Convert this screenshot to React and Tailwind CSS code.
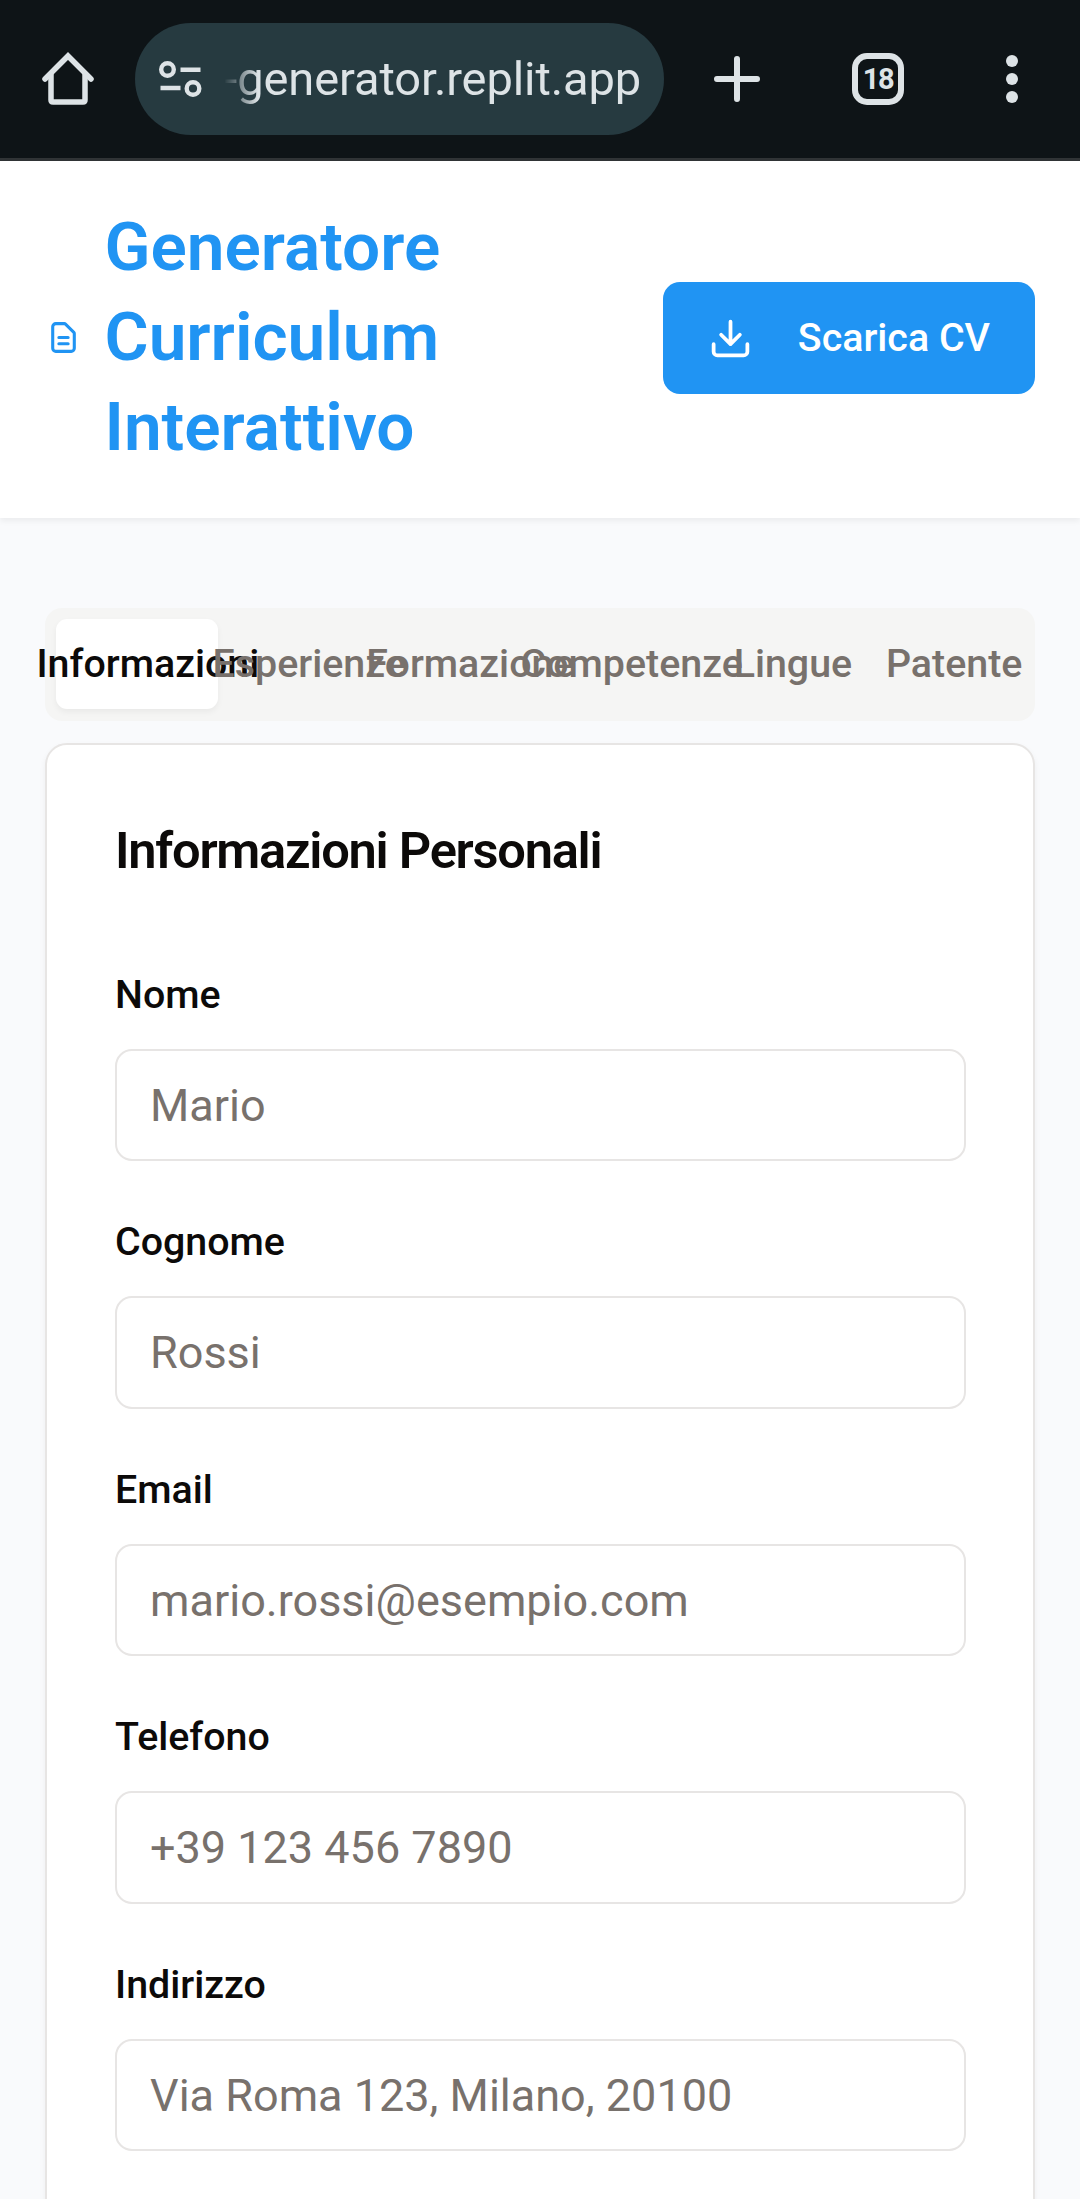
import React from "react";

const TABS = ["Informazioni", "Esperienze", "Formazione", "Competenze", "Lingue", "Patente"];

const FIELDS = [
  { label: "Nome", placeholder: "Mario" },
  { label: "Cognome", placeholder: "Rossi" },
  { label: "Email", placeholder: "mario.rossi@esempio.com" },
  { label: "Telefono", placeholder: "+39 123 456 7890" },
  { label: "Indirizzo", placeholder: "Via Roma 123, Milano, 20100" },
];

function BrowserBar() {
  return (
    <div className="flex h-[161px] shrink-0 items-center border-b-[3px] border-[#303436] bg-[#0e1417] text-[#dde3e6]">
      <svg className="ml-[41px] h-[54px] w-[54px] shrink-0" viewBox="0 0 54 54" fill="none" stroke="currentColor" strokeWidth="5.5" strokeLinecap="round" strokeLinejoin="round">
        <path d="M4 27 L27 4 L50 27" strokeLinejoin="miter" />
        <path d="M10 23 V48 Q10 50 12 50 H42 Q44 50 44 48 V23" />
      </svg>
      <div className="ml-[40px] flex h-[112px] w-[529px] items-center rounded-full bg-[#263a40]">
        <svg className="ml-[24px] h-[38px] w-[43px] shrink-0" viewBox="0 0 43 38" fill="none" stroke="currentColor" strokeWidth="4.4">
          <circle cx="8.5" cy="9.5" r="6.3" />
          <path d="M21.5 9.7H41.5M1.5 28H21.5" />
          <circle cx="34" cy="28.5" r="6.3" />
        </svg>
        <div className="ml-[20px] flex w-[419px] justify-end whitespace-nowrap font-[Roboto] text-[47px] leading-[56px] tracking-[-0.1px] [mask-image:linear-gradient(to_right,transparent_2px,black_36px)]">
          -generator.replit.app
        </div>
      </div>
      <svg className="ml-[49px] h-[48px] w-[48px] shrink-0" viewBox="0 0 48 48" fill="none" stroke="currentColor" strokeWidth="6" strokeLinecap="round">
        <path d="M24 4V44M4 24H44" />
      </svg>
      <div className="ml-[91px] flex h-[52px] w-[52px] shrink-0 items-center justify-center rounded-[15px] border-[6px] border-[#dde3e6] font-[Roboto] text-[29px] font-bold leading-none tracking-[-1.5px]">
        18
      </div>
      <svg className="ml-[102px] h-[48px] w-[12px] shrink-0" viewBox="0 0 12 48" fill="currentColor">
        <circle cx="6" cy="6" r="6" />
        <circle cx="6" cy="24" r="6" />
        <circle cx="6" cy="42" r="6" />
      </svg>
    </div>
  );
}

function Header() {
  return (
    <header className="flex h-[357px] shrink-0 items-center justify-between bg-white px-[45px] pb-[3px] shadow-[0_3px_6px_rgba(0,0,0,0.06)]">
      <div className="flex items-center pb-[2px] text-[#2094f3]">
        <svg className="h-[37px] w-[37px]" viewBox="0 0 24 24" fill="none" stroke="currentColor" strokeWidth="2" strokeLinecap="round" strokeLinejoin="round">
          <path d="M9 12h6m-6 4h6m2 5H7a2 2 0 0 1-2-2V5a2 2 0 0 1 2-2h5.586a1 1 0 0 1 .707.293l5.414 5.414a1 1 0 0 1 .293.707V19a2 2 0 0 1-2 2z" />
        </svg>
        <h1 className="ml-[22.5px] w-[360px] text-[67.5px] font-semibold leading-[90px]">Generatore Curriculum Interattivo</h1>
      </div>
      <button className="flex h-[112px] w-[372px] items-center justify-between rounded-[17px] bg-[#2094f3] px-[45px] text-[39.375px] font-medium text-white">
        <svg className="h-[45px] w-[45px]" viewBox="0 0 24 24" fill="none" stroke="currentColor" strokeWidth="2" strokeLinecap="round" strokeLinejoin="round">
          <path d="M21 15v4a2 2 0 0 1-2 2H5a2 2 0 0 1-2-2v-4M7 10l5 5 5-5M12 15V3" />
        </svg>
        <span className="whitespace-nowrap">Scarica CV</span>
      </button>
    </header>
  );
}

function Tabs() {
  return (
    <div className="grid h-[112.5px] grid-cols-6 rounded-[17px] bg-[#f5f5f4] p-[11.25px]">
      {TABS.map((tab, i) => (
        <button
          key={tab}
          className={
            i === 0
              ? "flex min-w-0 items-center justify-center whitespace-nowrap rounded-[11px] bg-white pb-[1px] pl-[22px] text-[39.375px] font-medium text-[#0c0a09] shadow-[0_3px_6px_rgba(0,0,0,0.05)]"
              : "flex min-w-0 items-center justify-center whitespace-nowrap rounded-[11px] pb-[1px] pl-[22px] text-[39.375px] font-medium text-[#78716c]"
          }
        >
          {tab}
        </button>
      ))}
    </div>
  );
}

export default function App() {
  return (
    <div className="flex h-[2199px] w-[1080px] flex-col overflow-hidden bg-[#f9fafc] font-[Roboto,sans-serif] text-[#0c0a09]">
      <BrowserBar />
      <Header />
      <main className="px-[45px] pt-[90px]">
        <Tabs />
        <section className="mt-[22.5px] h-[1600px] rounded-[22px] border-2 border-[#e7e5e4] bg-white pl-[68px] pr-[67px] pt-[67px] shadow-[0_3px_6px_rgba(0,0,0,0.05)]">
          <h2 className="text-[50.625px] font-semibold leading-[78.75px] tracking-[-0.025em]">Informazioni Personali</h2>
          <form className="mt-[68px] flex flex-col gap-[45px]">
            {FIELDS.map((f) => (
              <label key={f.label} className="flex h-[202.5px] flex-col justify-between">
                <span className="text-[39.375px] font-medium leading-[72px]">{f.label}</span>
                <input
                  className="h-[112.5px] w-full rounded-[17px] border-2 border-[#e7e5e4] bg-white px-[33px] text-[45px] outline-none placeholder:text-[#78716c]"
                  placeholder={f.placeholder}
                />
              </label>
            ))}
          </form>
        </section>
      </main>
    </div>
  );
}
